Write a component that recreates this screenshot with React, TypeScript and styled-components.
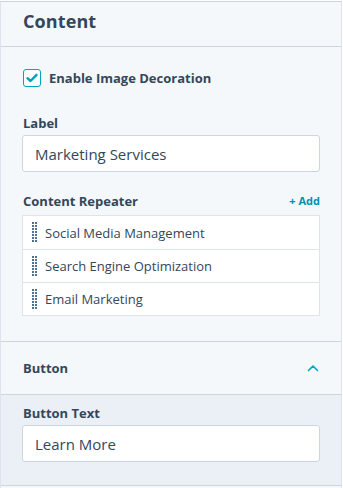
import React from "react";
import styled, { createGlobalStyle } from "styled-components";

const Global = createGlobalStyle`
  html, body { margin: 0; padding: 0; background: #ffffff; }
  body { font-family: "Open Sans", "Noto Sans", sans-serif; color: #33475b; }
  * { box-sizing: border-box; }
`;

const Panel = styled.div`
  width: 342px;
  height: 487px;
  background: #f5f8fa;
  border-left: 1px solid #dfe3eb;
  border-right: 1px solid #dfe3eb;
  border-top: 1px solid #cbd6e2;
  margin-top: 1px;
  overflow: hidden;
`;

const Header = styled.div`
  height: 45px;
  display: flex;
  align-items: center;
  padding: 0 22px 6px;
  border-bottom: 1px solid #cbd6e2;
`;

const Title = styled.h2`
  margin: 0;
  font-size: 18px;
  font-weight: 700;
  color: #33475b;
  letter-spacing: 0.1px;
`;

const Body = styled.div`
  padding: 22px 21px 25px 21px;
  display: flex;
  flex-direction: column;
  border-bottom: 1px solid #cbd6e2;
`;

const CheckRow = styled.label`
  display: flex;
  align-items: center;
  gap: 8px;
  font-size: 13px;
  font-weight: 700;
  color: #33475b;
  height: 18px;
  margin-left: 1px;
`;

const Box = styled.span`
  width: 18px;
  height: 18px;
  border: 1.5px solid #00a4bd;
  border-radius: 3px;
  background: #ffffff;
  display: flex;
  align-items: center;
  justify-content: center;
`;

const Field = styled.div<{ $top: number }>`
  display: flex;
  flex-direction: column;
  margin-top: ${(p) => p.$top}px;
`;

const FieldLabel = styled.div`
  font-size: 13px;
  font-weight: 700;
  color: #33475b;
  line-height: 16px;
  display: flex;
  justify-content: space-between;
  align-items: center;
  padding-left: 1px;
`;

const AddLink = styled.span`
  color: #0091ae;
  font-size: 11px;
  font-weight: 700;
`;

const Input = styled.div`
  margin-top: 4px;
  height: 37px;
  background: #ffffff;
  border: 1px solid #cbd6e2;
  border-radius: 3px;
  display: flex;
  align-items: center;
  padding: 0 12px;
  font-size: 15px;
  color: #33475b;
`;

const List = styled.div`
  margin-top: 6px;
  background: #ffffff;
  border: 1px solid #dfe3eb;
  display: flex;
  flex-direction: column;
`;

const Item = styled.div`
  height: 33px;
  display: flex;
  align-items: center;
  gap: 7px;
  padding-left: 9px;
  font-size: 13px;
  color: #33475b;
  & + & { border-top: 1px solid #dfe3eb; }
`;

const Section = styled.div`
  height: 53px;
  display: flex;
  align-items: center;
  justify-content: space-between;
  padding: 0 22px 0 22px;
  border-bottom: 1px solid #cbd6e2;
  font-size: 13px;
  font-weight: 700;
  color: #33475b;
`;

const SubBody = styled.div`
  background: #eaf0f6;
  padding: 10px 21px 23px 21px;
  border-bottom: 1px solid #cbd6e2;
`;

const Handle = () => (
  <svg width="6" height="21" viewBox="0 0 6 21">
    {Array.from({ length: 7 }).map((_, r) =>
      [0, 3].map((x) => (
        <rect key={`${r}-${x}`} x={x} y={r * 3} width="2" height="2" fill="#516f90" />
      ))
    )}
  </svg>
);

const items = ["Social Media Management", "Search Engine Optimization", "Email Marketing"];

export default function App() {
  return (
    <>
      <Global />
      <Panel>
        <Header>
          <Title>Content</Title>
        </Header>
        <Body>
          <CheckRow>
            <Box>
              <svg width="12" height="10" viewBox="0 0 12 10">
                <path d="M1.5 5.2 L4.5 8 L10.5 1.8" fill="none" stroke="#00a4bd" strokeWidth="2.4" strokeLinecap="round" strokeLinejoin="round" />
              </svg>
            </Box>
            Enable Image Decoration
          </CheckRow>
          <Field $top={28}>
            <FieldLabel>Label</FieldLabel>
            <Input>Marketing Services</Input>
          </Field>
          <Field $top={21}>
            <FieldLabel>
              Content Repeater
              <AddLink>+ Add</AddLink>
            </FieldLabel>
            <List>
              {items.map((t) => (
                <Item key={t}>
                  <Handle />
                  {t}
                </Item>
              ))}
            </List>
          </Field>
        </Body>
        <Section>
          Button
          <svg width="12" height="8" viewBox="0 0 12 8">
            <path d="M1.5 6.5 L6 2 L10.5 6.5" fill="none" stroke="#00a4bd" strokeWidth="1.6" strokeLinecap="round" strokeLinejoin="round" />
          </svg>
        </Section>
        <SubBody>
          <FieldLabel>Button Text</FieldLabel>
          <Input>Learn More</Input>
        </SubBody>
      </Panel>
    </>
  );
}
